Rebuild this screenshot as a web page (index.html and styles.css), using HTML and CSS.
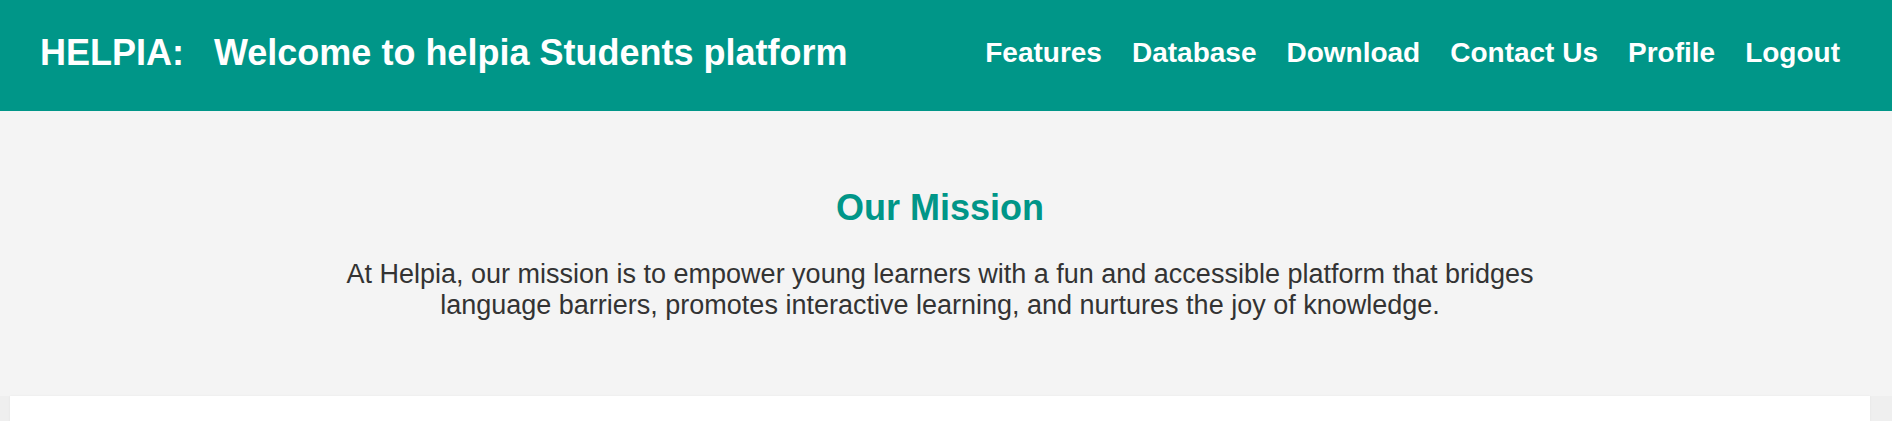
FILE: index.html
```html
<!DOCTYPE html>
<html lang="en">
<head>
<meta charset="utf-8">
<title>Helpia</title>
<link rel="stylesheet" href="styles.css">
</head>
<body>
<header class="site-header">
  <h1 class="brand"><span class="brand-name">HELPIA:</span><span class="brand-tagline">Welcome to helpia Students platform</span></h1>
  <nav class="nav">
    <a href="#">Features</a>
    <a href="#">Database</a>
    <a href="#">Download</a>
    <a href="#">Contact Us</a>
    <a href="#">Profile</a>
    <a href="#">Logout</a>
  </nav>
</header>
<section class="mission">
  <h2 class="mission-title">Our Mission</h2>
  <p class="mission-text">At Helpia, our mission is to empower young learners with a fun and accessible platform that bridges language barriers, promotes interactive learning, and nurtures the joy of knowledge.</p>
</section>
<main class="content"></main>
</body>
</html>
```
FILE: styles.css
```css
* { box-sizing: border-box; }
html, body { margin: 0; padding: 0; }
body {
  background: #efefef;
  font-family: "Liberation Sans", Arial, sans-serif;
  color: #333;
}
.site-header {
  background: #009688;
  color: #fff;
  height: 111px;
  display: flex;
  align-items: center;
  justify-content: space-between;
  padding: 0 52px 6px 40px;
}
.brand {
  margin: 0;
  font-size: 36px;
  font-weight: bold;
  white-space: nowrap;
  display: flex;
  gap: 30px;
}
.nav {
  display: flex;
  gap: 30px;
}
.nav a {
  color: #fff;
  text-decoration: none;
  font-size: 28px;
  font-weight: bold;
}
.mission {
  background: #f4f4f4;
  padding: 76px 12px 75px 0;
  text-align: center;
}
.mission-title {
  margin: 0 0 30px;
  font-size: 36px;
  font-weight: bold;
  color: #009688;
}
.mission-text {
  margin: 0 auto;
  max-width: 1250px;
  font-size: 27px;
  color: #333;
}
.content {
  background: #fff;
  margin: 0 22px 0 10px;
  height: 60px;
  box-shadow: 0 0 2px rgba(0,0,0,0.06);
}
```
